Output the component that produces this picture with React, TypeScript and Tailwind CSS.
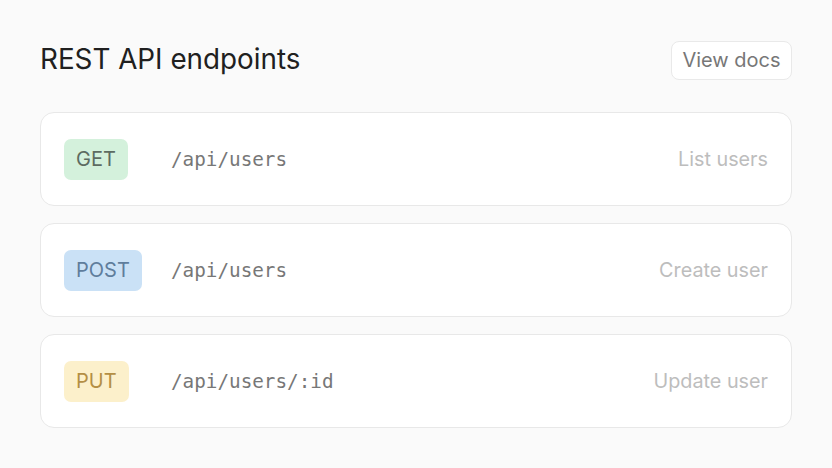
import React from "react";

const rows = [
  { method: "GET", path: "/api/users", desc: "List users", badge: "bg-[#d4f1dc] text-[#5d6b61]" },
  { method: "POST", path: "/api/users", desc: "Create user", badge: "bg-[#cae1f6] text-[#5f7d9c]" },
  { method: "PUT", path: "/api/users/:id", desc: "Update user", badge: "bg-[#fcf0cb] text-[#b48f45]" },
];

export default function App() {
  return (
    <div className="w-[832px] h-[468px] bg-[#fafafa] px-10 pt-10 font-['Inter',sans-serif]">
      <div className="flex items-center justify-between h-[40px]">
        <h1 className="text-[27.8px] text-[#202020] leading-none">REST API endpoints</h1>
        <button className="h-[39px] w-[121px] rounded-[8px] border border-[#e9e9e9] bg-white text-[20px] text-[#777777]">
          View docs
        </button>
      </div>
      <div className="mt-[32px] flex flex-col gap-[17px]">
        {rows.map((r) => (
          <div
            key={r.method}
            className="h-[94px] flex items-center rounded-[14px] border border-[#e8e8e8] bg-white px-[23px]"
          >
            <div className="w-[107px] shrink-0">
              <span className={`inline-flex h-[41px] items-center rounded-[7px] px-[12px] text-[20px] ${r.badge}`}>
                {r.method}
              </span>
            </div>
            <span className="font-['DejaVu_Sans_Mono',monospace] text-[19.3px] text-[#777777] pt-[2px]">{r.path}</span>
            <span className="ml-auto text-[19.8px] text-[#bdbdbd] pt-[2px]">{r.desc}</span>
          </div>
        ))}
      </div>
    </div>
  );
}
